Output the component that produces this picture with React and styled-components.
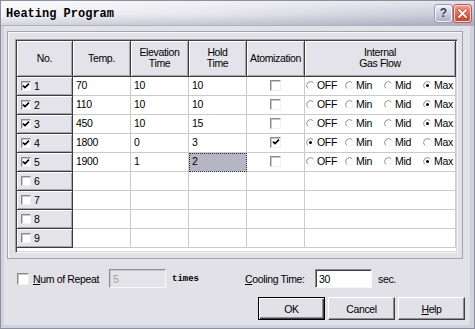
import React from "react";
import styled, { createGlobalStyle } from "styled-components";

const GlobalStyle = createGlobalStyle`
  html, body {
    margin: 0;
    padding: 0;
    background: #ffffff;
  }
  body {
    font-family: "Liberation Sans", Arial, sans-serif;
    font-size: 10.5px;
    letter-spacing: -0.35px;
    color: #000;
  }
`;

const Window = styled.div`
  width: 475px;
  height: 329px;
  box-sizing: border-box;
  border: 1px solid #8e8ea0;
  background: #d2d2dc;
  display: flex;
  flex-direction: column;
`;

const TitleBar = styled.div`
  height: 25px;
  flex: none;
  display: flex;
  align-items: center;
  padding: 0 3px 0 5px;
  box-sizing: border-box;
  background:
    linear-gradient(to bottom, rgba(255,255,255,0.55) 0%, rgba(255,255,255,0.1) 55%, rgba(20,20,60,0.14) 100%),
    linear-gradient(to right, #f4f4f8 0%, #e2e2ea 45%, #c2c2d4 100%);
  border-bottom: 1px solid #b0b0c2;
`;

const Title = styled.div`
  flex: 1;
  font-family: "Liberation Mono", "DejaVu Sans Mono", monospace;
  font-weight: bold;
  font-size: 12px;
  letter-spacing: 0;
  color: #000;
  padding-top: 2px;
`;

const CaptionButton = styled.div`
  width: 17px;
  height: 17px;
  box-sizing: border-box;
  border-radius: 3px;
  border: 1px solid ${(p) => (p.$close ? "#f4d8d0" : "#f4f4fa")};
  margin-left: 2px;
  display: flex;
  align-items: center;
  justify-content: center;
  background: ${(p) =>
    p.$close
      ? "linear-gradient(to bottom, #f09a86 0%, #e06a54 50%, #c8442e 100%)"
      : "linear-gradient(to bottom, #eeeef4 0%, #c8cadc 60%, #aeb2c8 100%)"};
  box-shadow: 0 0 0 1px ${(p) => (p.$close ? "#b85848" : "#9a9cb4")};
  font-family: "Liberation Sans", Arial, sans-serif;
  font-weight: bold;
  font-size: 12px;
  letter-spacing: 0;
  color: #3c3c4c;
`;

const Content = styled.div`
  flex: 1;
  margin: 0 4px 3px 3px;
  background: #e2e1e7;
  display: flex;
  flex-direction: column;
  padding: 5px 0 0 3px;
`;

const GroupFrame = styled.div`
  width: 456px;
  height: 228px;
  box-sizing: border-box;
  border: 1px solid #a4a4ac;
  box-shadow: inset 1px 1px 0 #f8f8fa;
  padding: 7px 0 0 7px;
`;

const GridBox = styled.div`
  width: 443px;
  height: 214px;
  box-sizing: border-box;
  background: #ffffff;
  border-top: 1px solid #9c9ca4;
  border-left: 1px solid #9c9ca4;
  border-right: 1px solid #f4f4f6;
  border-bottom: 1px solid #f4f4f6;
  box-shadow: inset 1px 1px 0 #404040, inset -1px -1px 0 #d8d8dc;
  padding: 1px;
`;

const Table = styled.div`
  display: grid;
  grid-template-columns: 56px 58px 58px 58px 58px 151px;
  grid-template-rows: 36px repeat(9, 19px);
`;

const HeadCell = styled.div`
  box-sizing: border-box;
  background: #e4e3e9;
  border-right: 1px solid #3c3c3c;
  border-bottom: 1px solid #3c3c3c;
  box-shadow: inset 1px 1px 0 #ffffff, inset -1px -1px 0 #a6a6ae;
  display: flex;
  align-items: center;
  justify-content: center;
  text-align: center;
  line-height: 11px;
  padding-bottom: 1px;
`;

const RowHead = styled.div`
  box-sizing: border-box;
  background: #e4e3e9;
  border-right: 1px solid #3c3c3c;
  border-bottom: 1px solid #3c3c3c;
  box-shadow: inset 1px 1px 0 #ffffff, inset -1px -1px 0 #a6a6ae;
  display: flex;
  align-items: center;
  padding-left: 4px;
  gap: 3px;
`;

const Cell = styled.div`
  box-sizing: border-box;
  background: ${(p) => (p.$selected ? "#b6b6c4" : "#ffffff")};
  border-right: 1px solid #cacaca;
  border-bottom: 1px solid #cacaca;
  outline: ${(p) => (p.$selected ? "1px dotted #303030" : "none")};
  outline-offset: -1px;
  display: flex;
  align-items: center;
  justify-content: ${(p) => (p.$center ? "center" : "flex-start")};
  padding-left: ${(p) => (p.$pad !== undefined ? p.$pad : 3)}px;
  padding-bottom: 2px;
`;

const CheckBoxBox = styled.span`
  width: ${(p) => p.$size}px;
  height: ${(p) => p.$size}px;
  flex: none;
  box-sizing: border-box;
  background: #ffffff;
  border-top: 1px solid #8a8a8a;
  border-left: 1px solid #8a8a8a;
  border-right: 1px solid #f0f0f0;
  border-bottom: 1px solid #f0f0f0;
  box-shadow: inset 1px 1px 0 #c8c8c8;
  display: flex;
  align-items: center;
  justify-content: center;
`;

const RadioGroup = styled.div`
  display: flex;
`;

const RadioOption = styled.div`
  width: 39px;
  display: flex;
  align-items: center;
  gap: 2px;
`;

const BottomRow = styled.div`
  display: flex;
  align-items: center;
  margin-top: 10px;
  padding-left: 10px;
  height: 19px;
`;

const Label = styled.span`
  flex: none;
  width: ${(p) => (p.$w ? `${p.$w}px` : "auto")};
  margin-left: ${(p) => p.$ml || 0}px;
  font-family: ${(p) =>
    p.$mono ? '"Liberation Mono", "DejaVu Sans Mono", monospace' : "inherit"};
  font-size: ${(p) => (p.$mono ? "9px" : "inherit")};
  font-weight: ${(p) => (p.$mono ? "bold" : "normal")};
  letter-spacing: ${(p) => (p.$mono ? "0" : "inherit")};
  white-space: nowrap;
`;

const TextBox = styled.div`
  width: 57px;
  height: 19px;
  flex: none;
  box-sizing: border-box;
  background: ${(p) => (p.$disabled ? "#e4e3e9" : "#ffffff")};
  color: ${(p) => (p.$disabled ? "#a0a0a0" : "#000")};
  border-top: 1px solid #8c8c94;
  border-left: 1px solid #8c8c94;
  border-right: 1px solid #f8f8fa;
  border-bottom: 1px solid #f8f8fa;
  box-shadow: inset 1px 1px 0 ${(p) => (p.$disabled ? "#c8c8cc" : "#404040")};
  padding: 3px 0 0 3px;
`;

const ButtonRow = styled.div`
  display: flex;
  justify-content: flex-end;
  gap: 3px;
  margin-top: 9px;
  padding-right: 5px;
`;

const Button = styled.div`
  width: 67px;
  height: 23px;
  box-sizing: border-box;
  background: #e2e1e7;
  border: 1px solid;
  border-color: ${(p) => (p.$default ? "#000" : "#ffffff #404040 #404040 #ffffff")};
  box-shadow: ${(p) =>
    p.$default
      ? "inset 1px 1px 0 #ffffff, inset -1px -1px 0 #404040, inset -2px -2px 0 #8c8c94"
      : "inset -1px -1px 0 #8c8c94"};
  display: flex;
  align-items: center;
  justify-content: center;
`;

function Check({ checked, size = 10 }) {
  return (
    <CheckBoxBox $size={size}>
      {checked && (
        <svg width="8" height="8" viewBox="0 0 8 8">
          <path d="M1 3.6 L3 5.6 L7 1.6" stroke="#000" strokeWidth="1.7" fill="none" />
        </svg>
      )}
    </CheckBoxBox>
  );
}

function Radio({ checked }) {
  return (
    <svg width="9" height="9" viewBox="0 0 9 9">
      <circle cx="4.5" cy="4.5" r="3.9" fill="#ffffff" />
      <path d="M7.26 1.74 A3.9 3.9 0 0 0 1.74 7.26" stroke="#8c8c8c" strokeWidth="1" fill="none" />
      <path d="M1.74 7.26 A3.9 3.9 0 0 0 7.26 1.74" stroke="#ececec" strokeWidth="1" fill="none" />
      {checked && <circle cx="4.5" cy="4.5" r="1.5" fill="#000" />}
    </svg>
  );
}

const gasOptions = ["OFF", "Min", "Mid", "Max"];

const rows = [
  { n: 1, on: true, temp: "70", elev: "10", hold: "10", atom: false, gas: 3 },
  { n: 2, on: true, temp: "110", elev: "10", hold: "10", atom: false, gas: 3 },
  { n: 3, on: true, temp: "450", elev: "10", hold: "15", atom: false, gas: 3 },
  { n: 4, on: true, temp: "1800", elev: "0", hold: "3", atom: true, gas: 0 },
  { n: 5, on: true, temp: "1900", elev: "1", hold: "2", atom: false, gas: 3, sel: true },
  { n: 6 },
  { n: 7 },
  { n: 8 },
  { n: 9 },
];

export default function App() {
  return (
    <>
      <GlobalStyle />
      <Window>
        <TitleBar>
          <Title>Heating Program</Title>
          <CaptionButton>?</CaptionButton>
          <CaptionButton $close>
            <svg width="11" height="11" viewBox="0 0 11 11">
              <path d="M2 2 L9 9 M9 2 L2 9" stroke="#9a3a2c" strokeWidth="3" strokeLinecap="round" />
              <path d="M2 2 L9 9 M9 2 L2 9" stroke="#ffffff" strokeWidth="1.8" strokeLinecap="round" />
            </svg>
          </CaptionButton>
        </TitleBar>
        <Content>
          <GroupFrame>
            <GridBox>
              <Table>
                <HeadCell>No.</HeadCell>
                <HeadCell>Temp.</HeadCell>
                <HeadCell>Elevation<br />Time</HeadCell>
                <HeadCell>Hold<br />Time</HeadCell>
                <HeadCell>Atomization</HeadCell>
                <HeadCell>Internal<br />Gas Flow</HeadCell>
                {rows.map((r) => (
                  <React.Fragment key={r.n}>
                    <RowHead>
                      <Check checked={!!r.on} />
                      <span>{r.n}</span>
                    </RowHead>
                    <Cell>{r.temp}</Cell>
                    <Cell>{r.elev}</Cell>
                    <Cell $selected={r.sel}>{r.hold}</Cell>
                    <Cell $center $pad={0}>{r.temp && <Check checked={r.atom} size={11} />}</Cell>
                    <Cell $pad={1}>
                      {r.temp && (
                        <RadioGroup>
                          {gasOptions.map((g, i) => (
                            <RadioOption key={g}>
                              <Radio checked={r.gas === i} />
                              <span>{g}</span>
                            </RadioOption>
                          ))}
                        </RadioGroup>
                      )}
                    </Cell>
                  </React.Fragment>
                ))}
              </Table>
            </GridBox>
          </GroupFrame>
          <BottomRow>
            <Check size={12} />
            <Label $ml={4} $w={76}><u>N</u>um of Repeat</Label>
            <TextBox $disabled>5</TextBox>
            <Label $ml={6} $w={73} $mono>times</Label>
            <Label $w={70}><u>C</u>ooling Time:</Label>
            <TextBox>30</TextBox>
            <Label $ml={6}>sec.</Label>
          </BottomRow>
          <ButtonRow>
            <Button $default>OK</Button>
            <Button>Cancel</Button>
            <Button><u>H</u>elp</Button>
          </ButtonRow>
        </Content>
      </Window>
    </>
  );
}
